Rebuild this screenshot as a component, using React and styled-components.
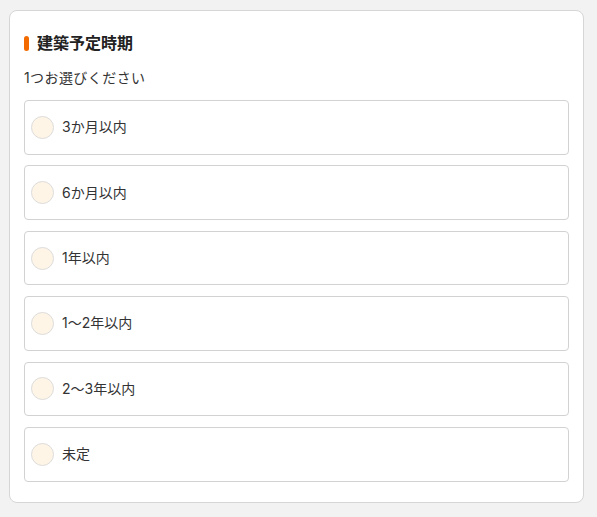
import React from "react";
import styled, { createGlobalStyle } from "styled-components";

const Global = createGlobalStyle`
  html, body { margin: 0; padding: 0; background: #f2f2f2; }
  body {
    font-family: Inter, "Noto Sans CJK JP", "Noto Sans", sans-serif;
    color: #333;
  }
  * { box-sizing: border-box; }
`;

const Page = styled.div`
  padding: 10px 13px 14px 9px;
`;

const Card = styled.section`
  background: #fff;
  border: 1px solid #d6d6d6;
  border-radius: 8px;
  padding: 22px 14px 20px 14px;
`;

const Title = styled.h2`
  margin: 0;
  display: flex;
  align-items: center;
  gap: 8px;
  font-size: 16px;
  font-weight: 700;
  line-height: 20px;
  color: #222;
  &::before {
    content: "";
    display: block;
    width: 5px;
    height: 15px;
    border-radius: 3px;
    background: #f26a00;
  }
`;

const Hint = styled.p`
  margin: 15px 0 12px;
  font-size: 14px;
  line-height: 20px;
  letter-spacing: 0.03em;
  color: #333;
`;

const List = styled.div`
  display: flex;
  flex-direction: column;
  gap: 10.8px;
`;

const Option = styled.label`
  display: flex;
  align-items: center;
  gap: 8px;
  height: 54.6px;
  padding: 0 6px;
  border: 1px solid #d2d2d2;
  border-radius: 4px;
  font-size: 14px;
  line-height: 18px;
  color: #333;
  cursor: pointer;
`;

const Radio = styled.span`
  width: 23px;
  height: 23px;
  border-radius: 50%;
  border: 1px solid #dcdcdc;
  background: #fff5e6;
  flex: none;
`;

const options = ["3か月以内", "6か月以内", "1年以内", "1〜2年以内", "2〜3年以内", "未定"];

export default function App() {
  return (
    <>
      <Global />
      <Page>
        <Card>
          <Title>建築予定時期</Title>
          <Hint>1つお選びください</Hint>
          <List>
            {options.map((o) => (
              <Option key={o}>
                <Radio />
                <span>{o}</span>
              </Option>
            ))}
          </List>
        </Card>
      </Page>
    </>
  );
}
